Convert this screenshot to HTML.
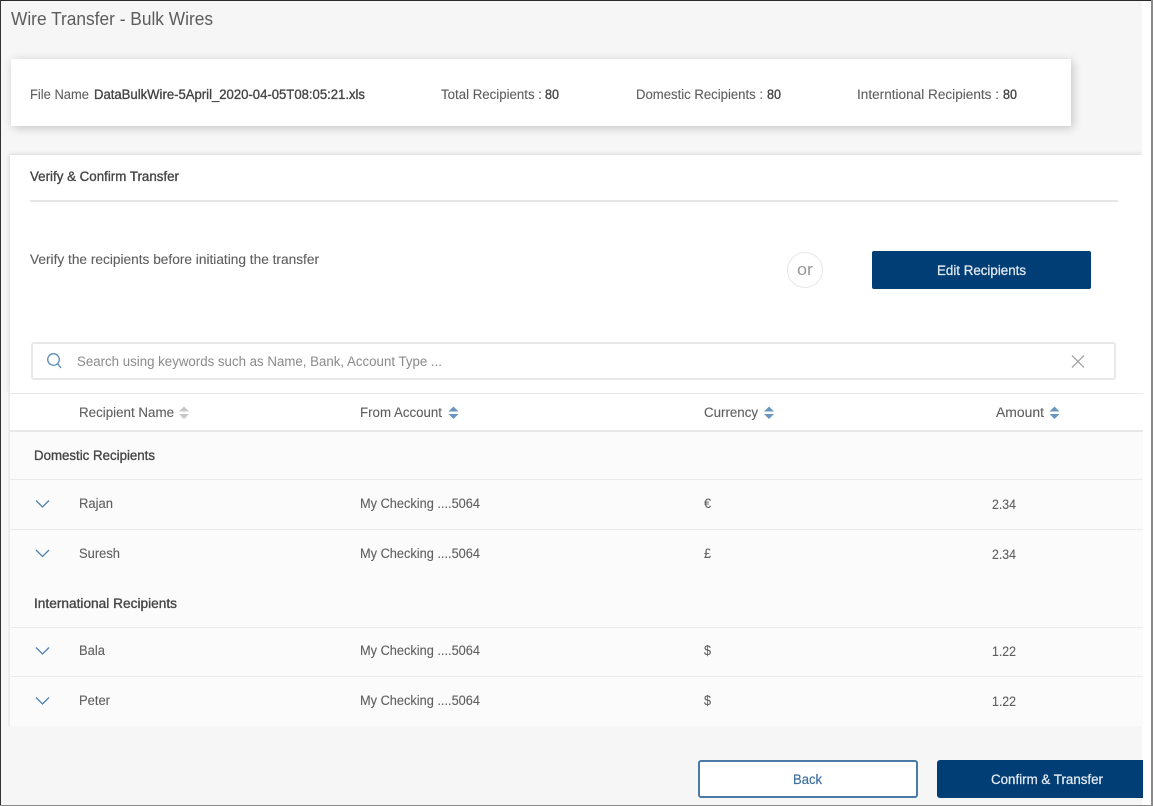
<!DOCTYPE html>
<html>
<head>
<meta charset="utf-8">
<style>
html,body{margin:0;padding:0;background:#fff;}
body{width:1153px;height:806px;position:relative;overflow:hidden;font-family:"Liberation Sans",sans-serif;}
.b{position:absolute;box-sizing:border-box;}
svg{position:absolute;left:0;top:0;}
text{font-family:"Liberation Sans",sans-serif;font-size:13.5px;fill:#5a5a5a;filter:blur(.3px);}
.s{stroke:#484848;stroke-width:.35px;fill:#444;}
.t{fill:#5f5f5f;stroke:#5f5f5f;stroke-width:.12px;}
</style>
</head>
<body>
<div class="b" style="left:1px;top:1px;width:1141px;height:804px;background:#f6f6f6"></div>
<div class="b" style="left:11px;top:59px;width:1060px;height:67px;background:#fff;box-shadow:2px 2px 9px rgba(0,0,0,.2)"></div>
<div class="b" style="left:10px;top:155px;width:1133px;height:238px;background:#fff;box-shadow:-1px -1px 4px rgba(0,0,0,.12)"></div>
<div class="b" style="left:1142px;top:0;width:10px;height:805px;background:#fff"></div>
<div class="b" style="left:30px;top:200px;width:1088px;height:2px;background:#e6e6e6"></div>
<div class="b" style="left:787px;top:252px;width:36px;height:36px;border:1px solid #e8e8e8;border-radius:50%;background:#fff"></div>
<div class="b" style="left:872px;top:251px;width:219px;height:38px;background:#023e76;border-radius:2px"></div>
<div class="b" style="left:31px;top:342px;width:1085px;height:38px;background:#fff;border:2px solid #e8e8e8;border-radius:3px"></div>
<div class="b" style="left:8px;top:385px;width:2px;height:341px;background:#ececec"></div>
<div class="b" style="left:10px;top:385px;width:1133px;height:8px;background:#fff"></div>
<div class="b" style="left:10px;top:393px;width:1133px;height:333px;background:#fbfbfb"></div>
<div class="b" style="left:10px;top:393px;width:1133px;height:39px;background:#fff;border-top:1px solid #e8e8e8;border-bottom:2px solid #e8e8e8"></div>
<div class="b" style="left:10px;top:479px;width:1133px;height:1px;background:#ebebeb"></div>
<div class="b" style="left:10px;top:529px;width:1133px;height:1px;background:#ebebeb"></div>
<div class="b" style="left:10px;top:627px;width:1133px;height:1px;background:#ebebeb"></div>
<div class="b" style="left:10px;top:676px;width:1133px;height:1px;background:#ebebeb"></div>
<div class="b" style="left:698px;top:760px;width:220px;height:38px;background:#fff;border:2px solid #4a7aa8;border-radius:3px"></div>
<div class="b" style="left:937px;top:760px;width:206px;height:38px;background:#023e76;border-radius:3px 0 0 3px"></div>
<div class="b" style="left:0;top:0;width:1153px;height:1px;background:#2a2a2a"></div>
<div class="b" style="left:0;top:0;width:1px;height:806px;background:#333"></div>
<div class="b" style="left:1151px;top:0;width:2px;height:806px;background:#8a8a8a"></div>
<div class="b" style="left:0;top:805px;width:1153px;height:1px;background:#8a8a8a"></div>

<svg width="1153" height="806" viewBox="0 0 1153 806" xmlns="http://www.w3.org/2000/svg">
<text x="11" y="25" style="font-size:18px;fill:#5c5c5c" textLength="202" lengthAdjust="spacingAndGlyphs">Wire Transfer - Bulk Wires</text>

<text x="30" y="99" class="t" textLength="59" lengthAdjust="spacingAndGlyphs">File Name</text>
<text x="94" y="99" class="s" textLength="271" lengthAdjust="spacingAndGlyphs">DataBulkWire-5April_2020-04-05T08:05:21.xls</text>
<text x="441" y="99" class="t" textLength="101" lengthAdjust="spacingAndGlyphs">Total Recipients :</text>
<text x="545" y="99" class="s" textLength="14" lengthAdjust="spacingAndGlyphs">80</text>
<text x="636" y="99" class="t" textLength="127" lengthAdjust="spacingAndGlyphs">Domestic Recipients :</text>
<text x="767" y="99" class="s" textLength="14" lengthAdjust="spacingAndGlyphs">80</text>
<text x="857" y="99" class="t" textLength="142" lengthAdjust="spacingAndGlyphs">Interntional Recipients :</text>
<text x="1003" y="99" class="s" textLength="14" lengthAdjust="spacingAndGlyphs">80</text>

<text x="30" y="181" class="s" textLength="149" lengthAdjust="spacingAndGlyphs">Verify &amp; Confirm Transfer</text>
<text x="30" y="264" class="t" textLength="289" lengthAdjust="spacingAndGlyphs">Verify the recipients before initiating the transfer</text>
<text x="797" y="275" style="font-size:17px;fill:#999" textLength="16" lengthAdjust="spacingAndGlyphs">or</text>
<text x="937" y="275" style="fill:#e4ebf2;stroke:#e4ebf2;stroke-width:.25px" textLength="89" lengthAdjust="spacingAndGlyphs">Edit Recipients</text>

<circle cx="53.5" cy="359.5" r="5.8" fill="none" stroke="#5b8cba" stroke-width="1.3"/>
<path d="M57.7 363.7L61 368" fill="none" stroke="#5b8cba" stroke-width="1.3"/>
<text x="77" y="366" style="fill:#8a8a8a" textLength="365" lengthAdjust="spacingAndGlyphs">Search using keywords such as Name, Bank, Account Type ...</text>
<path d="M1072 355.500L1084 367.500M1084 355.500L1072 367.500" fill="none" stroke="#a8a8a8" stroke-width="1.4"/>

<text x="79" y="417" class="t" textLength="95" lengthAdjust="spacingAndGlyphs">Recipient Name</text>
<path d="M179 411.500L184 406.500L189 411.500ZM179 414L184 419L189 414Z" fill="#c8c8c8"/>
<text x="360" y="417" class="t" textLength="82" lengthAdjust="spacingAndGlyphs">From Account</text>
<path d="M448.500 411.500L453.500 406.500L458.500 411.500ZM448.500 414L453.500 419L458.500 414Z" fill="#6a95bd"/>
<text x="704" y="417" class="t" textLength="54" lengthAdjust="spacingAndGlyphs">Currency</text>
<path d="M764 411.500L769 406.500L774 411.500ZM764 414L769 419L774 414Z" fill="#6a95bd"/>
<text x="996" y="417" class="t" textLength="48" lengthAdjust="spacingAndGlyphs">Amount</text>
<path d="M1049.500 411.500L1054.500 406.500L1059.500 411.500ZM1049.500 414L1054.500 419L1059.500 414Z" fill="#6a95bd"/>

<text x="34" y="460" class="s" textLength="121" lengthAdjust="spacingAndGlyphs">Domestic Recipients</text>

<path d="M36 500.500L42.500 507L49 500.500" fill="none" stroke="#4f80ad" stroke-width="1.3"/>
<text x="79" y="508" class="t" textLength="34" lengthAdjust="spacingAndGlyphs">Rajan</text>
<text x="360" y="508" class="t" textLength="120" lengthAdjust="spacingAndGlyphs">My Checking ....5064</text>
<text x="704" y="508" class="t" textLength="7" lengthAdjust="spacingAndGlyphs">€</text>
<text x="992" y="509" class="t" textLength="24" lengthAdjust="spacingAndGlyphs">2.34</text>

<path d="M36 550L42.500 556.500L49 550" fill="none" stroke="#4f80ad" stroke-width="1.3"/>
<text x="79" y="558" class="t" textLength="41" lengthAdjust="spacingAndGlyphs">Suresh</text>
<text x="360" y="558" class="t" textLength="120" lengthAdjust="spacingAndGlyphs">My Checking ....5064</text>
<text x="704" y="558" class="t" textLength="7" lengthAdjust="spacingAndGlyphs">£</text>
<text x="992" y="559" class="t" textLength="24" lengthAdjust="spacingAndGlyphs">2.34</text>

<text x="34" y="608" class="s" textLength="143" lengthAdjust="spacingAndGlyphs">International Recipients</text>

<path d="M36 647.500L42.500 654L49 647.500" fill="none" stroke="#4f80ad" stroke-width="1.3"/>
<text x="79" y="655" class="t" textLength="26" lengthAdjust="spacingAndGlyphs">Bala</text>
<text x="360" y="655" class="t" textLength="120" lengthAdjust="spacingAndGlyphs">My Checking ....5064</text>
<text x="704" y="655" class="t" textLength="7" lengthAdjust="spacingAndGlyphs">$</text>
<text x="992" y="656" class="t" textLength="24" lengthAdjust="spacingAndGlyphs">1.22</text>

<path d="M36 697.500L42.500 704L49 697.500" fill="none" stroke="#4f80ad" stroke-width="1.3"/>
<text x="79" y="705" class="t" textLength="31" lengthAdjust="spacingAndGlyphs">Peter</text>
<text x="360" y="705" class="t" textLength="120" lengthAdjust="spacingAndGlyphs">My Checking ....5064</text>
<text x="704" y="705" class="t" textLength="7" lengthAdjust="spacingAndGlyphs">$</text>
<text x="992" y="706" class="t" textLength="24" lengthAdjust="spacingAndGlyphs">1.22</text>

<text x="793" y="784" style="fill:#3f6f9f;stroke:#3f6f9f;stroke-width:.2px" textLength="29" lengthAdjust="spacingAndGlyphs">Back</text>
<text x="991" y="784" style="fill:#e4ebf2;stroke:#e4ebf2;stroke-width:.25px" textLength="112" lengthAdjust="spacingAndGlyphs">Confirm &amp; Transfer</text>
</svg>
</body>
</html>
